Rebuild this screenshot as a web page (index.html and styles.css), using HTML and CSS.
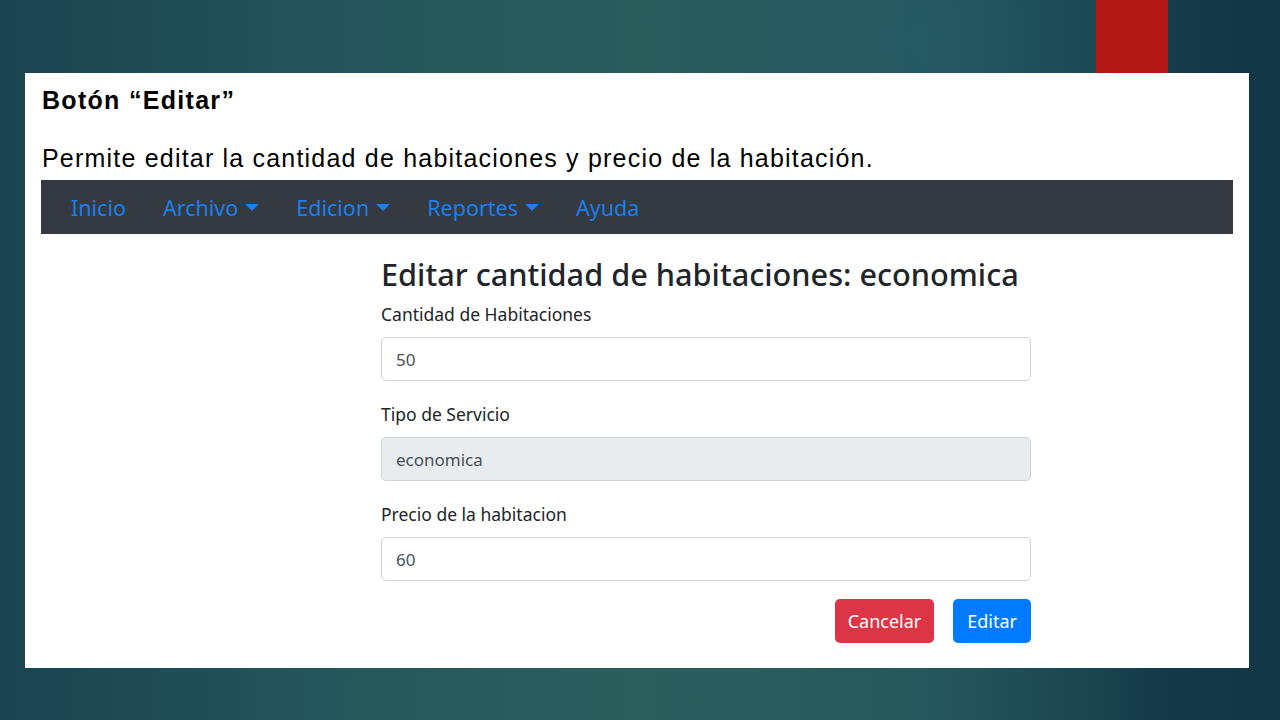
FILE: index.html
```html
<!DOCTYPE html>
<html lang="es">
<head>
<meta charset="utf-8">
<title>Botón Editar</title>
<link rel="stylesheet" href="styles.css">
</head>
<body>
<div class="slide">
  <div class="topband"><div class="accent"></div></div>
  <div class="panel">
    <h1 class="slide-title">Botón “Editar”</h1>
    <p class="slide-text">Permite editar la cantidad de habitaciones y precio de la habitación.</p>
    <nav class="navbar">
      <a class="nav-link">Inicio</a>
      <a class="nav-link dropdown">Archivo<span class="caret"></span></a>
      <a class="nav-link dropdown">Edicion<span class="caret"></span></a>
      <a class="nav-link dropdown">Reportes<span class="caret"></span></a>
      <a class="nav-link">Ayuda</a>
    </nav>
    <form class="edit-form">
      <h2 class="form-title">Editar cantidad de habitaciones: economica</h2>
      <div class="form-group">
        <label class="form-label">Cantidad de Habitaciones</label>
        <div class="form-control">50</div>
      </div>
      <div class="form-group">
        <label class="form-label">Tipo de Servicio</label>
        <div class="form-control readonly">economica</div>
      </div>
      <div class="form-group">
        <label class="form-label">Precio de la habitacion</label>
        <div class="form-control">60</div>
      </div>
      <div class="actions">
        <span class="btn btn-danger">Cancelar</span>
        <span class="btn btn-primary">Editar</span>
      </div>
    </form>
  </div>
</div>
</body>
</html>
```
FILE: styles.css
```css
html, body {
  margin: 0;
  padding: 0;
}
body {
  width: 1280px;
  height: 720px;
  overflow: hidden;
  background:
    radial-gradient(ellipse 420px 360px at 930px 40px, rgba(40,95,105,0.55), rgba(40,95,105,0) 70%),
    radial-gradient(ellipse 700px 500px at 700px 700px, rgba(45,95,95,0.6), rgba(45,95,95,0) 70%),
    linear-gradient(90deg, #1a4450 0%, #24545a 25%, #2b5c5c 50%, #23535a 72%, #143a48 90%, #123646 100%);
  font-family: "Liberation Sans", Arial, sans-serif;
}
.slide {
  display: flex;
  flex-direction: column;
}
.topband {
  height: 73px;
  display: flex;
}
.accent {
  margin-left: 1096px;
  width: 72px;
  height: 73px;
  background: #b01816;
}
.panel {
  margin-left: 25px;
  width: 1224px;
  height: 595px;
  background: #ffffff;
  box-sizing: border-box;
  padding-top: 12px;
}
.slide-title {
  margin: 0 0 0 17px;
  font-size: 25px;
  font-weight: bold;
  line-height: 30px;
  letter-spacing: 1.3px;
  color: #000;
}
.slide-text {
  margin: 28px 0 0 17px;
  font-size: 25px;
  line-height: 30px;
  letter-spacing: 1.2px;
  color: #000;
}
.navbar {
  margin: 7px 16px 0 16px;
  height: 54px;
  background: #343a40;
  display: flex;
  align-items: center;
  padding-left: 30px;
  gap: 37px;
  font-family: "Noto Sans", "Open Sans", sans-serif;
}
.nav-link {
  color: #1a7ff0;
  font-size: 21.5px;
  display: flex;
  align-items: center;
}
.caret {
  display: inline-block;
  margin-left: 7px;
  width: 0;
  height: 0;
  border-left: 7px solid transparent;
  border-right: 7px solid transparent;
  border-top: 7px solid #1a7ff0;
}
.edit-form {
  margin: 20px 0 0 356px;
  width: 650px;
  font-family: "Noto Sans", "Open Sans", sans-serif;
}
.form-title {
  margin: 0;
  font-size: 30.7px;
  font-weight: 500;
  line-height: 40px;
  color: #212529;
}
.form-group {
  margin-top: 8px;
}
.form-group + .form-group {
  margin-top: 21px;
}
.form-label {
  display: block;
  font-size: 17.5px;
  line-height: 24px;
  color: #212529;
  margin-bottom: 11px;
}
.form-control {
  height: 44px;
  box-sizing: border-box;
  border: 1px solid #ced4da;
  border-radius: 5px;
  padding: 0 14px;
  display: flex;
  align-items: center;
  font-size: 17px;
  color: #495057;
  background: #fff;
}
.form-control.readonly {
  background: #e9ecef;
}
.actions {
  display: flex;
  justify-content: flex-end;
  gap: 19px;
  margin-top: 18px;
}
.btn {
  height: 44px;
  box-sizing: border-box;
  display: flex;
  align-items: center;
  padding: 0 13px;
  border-radius: 5px;
  color: #fff;
  font-size: 18px;
}
.btn-danger {
  background: #dc3545;
}
.btn-primary {
  background: #007bff;
  padding: 0 14px;
}
```
